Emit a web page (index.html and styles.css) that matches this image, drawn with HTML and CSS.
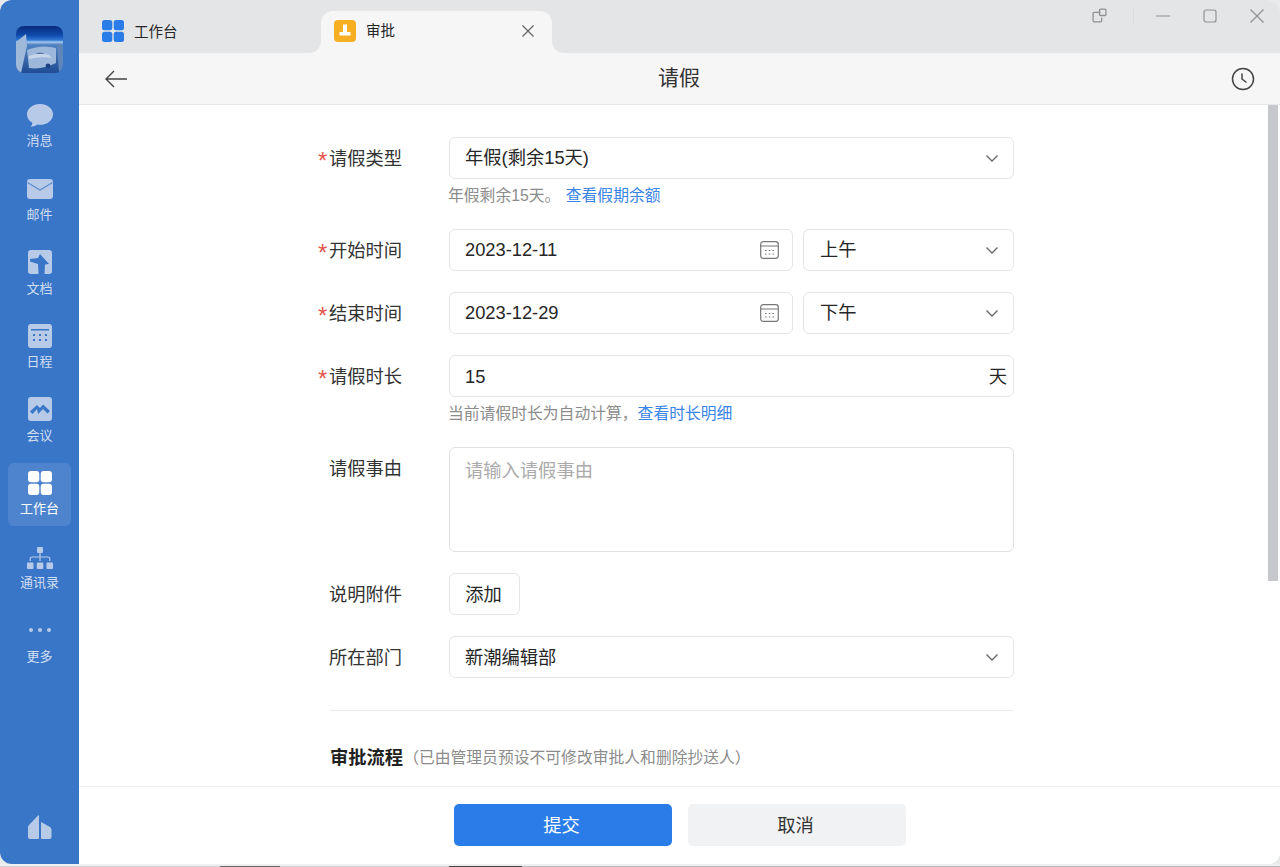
FILE: index.html
```html
<!DOCTYPE html>
<html lang="zh-CN">
<head>
<meta charset="utf-8">
<title>请假</title>
<link rel="stylesheet" href="styles.css">
</head>
<body>
<div class="window">
  <aside class="sidebar">
    <svg class="avatar" viewBox="0 0 47 47">
      <defs>
        <linearGradient id="sky" x1="0" y1="0" x2="0" y2="1">
          <stop offset="0" stop-color="#082a7c"/>
          <stop offset="0.2" stop-color="#0f4cae"/>
          <stop offset="0.3" stop-color="#2f78d4"/>
          <stop offset="0.34" stop-color="#a8c8ee"/>
          <stop offset="0.4" stop-color="#4f82c2"/>
          <stop offset="1" stop-color="#1f4c94"/>
        </linearGradient>
      </defs>
      <rect width="47" height="47" fill="url(#sky)"/>
      <path d="M0 47V16L10 8L11 20L5 47Z" fill="#9fb9da"/>
      <path d="M11 24Q26 18 40 22L40 37Q26 44 13 42Z" fill="#9db8da"/>
      <path d="M13 30Q24 25 33 29L36 32Q24 30 13 33Z" fill="#c6d6ea"/>
      <path d="M19 28Q24 25 29 28Z" fill="#54779f"/>
      <circle cx="32" cy="40" r="2.400" fill="#1d4186"/>
      <path d="M41 18L47 19V47H43Z" fill="#5f86bb"/>
    </svg>
    <nav class="nav">
      <div class="nav-item">
        <svg class="nav-icon" viewBox="0 0 26 26"><path d="M13 2C5.800 2 0 6.500 0 12.400C0 16 2.100 19 5.400 20.800C5.300 22.300 4.500 23.700 3.600 24.800C6.500 24.500 8.900 23.500 10.600 22.500C11.400 22.700 12.200 22.800 13 22.800C20.200 22.800 26 18.200 26 12.400C26 6.500 20.200 2 13 2Z"/></svg>
        <span>消息</span>
      </div>
      <div class="nav-item">
        <svg class="nav-icon" viewBox="0 0 26 26"><rect x="0" y="3" width="26" height="20" rx="3"/><path class="mail-line" d="M0.500 6.500L13 14L25.500 6.500"/></svg>
        <span>邮件</span>
      </div>
      <div class="nav-item">
        <svg class="nav-icon" viewBox="0 0 26 26"><path fill-rule="evenodd" d="M4 1H22A3 3 0 0 1 25 4V22A3 3 0 0 1 22 25H4A3 3 0 0 1 1 22V4A3 3 0 0 1 4 1ZM13 5L22 15L18 15.500L17.500 25H11.500L11 15L3 12.500V10L11 9Z"/></svg>
        <span>文档</span>
      </div>
      <div class="nav-item">
        <svg class="nav-icon" viewBox="0 0 26 26"><path fill-rule="evenodd" d="M4 1H22A3 3 0 0 1 25 4V22A3 3 0 0 1 22 25H4A3 3 0 0 1 1 22V4A3 3 0 0 1 4 1ZM4 6V7.500H22V6ZM6 11V13H8V11ZM12 11V13H14V11ZM18 11V13H20V11ZM6 16V18H8V16ZM12 16V18H14V16ZM18 16V18H20V16Z"/></svg>
        <span>日程</span>
      </div>
      <div class="nav-item">
        <svg class="nav-icon" viewBox="0 0 26 26"><path fill-rule="evenodd" d="M4 1H22A3 3 0 0 1 25 4V22A3 3 0 0 1 22 25H4A3 3 0 0 1 1 22V4A3 3 0 0 1 4 1ZM3 15.500L10 9L13 12L16 8.500L23 15L20.500 17.500L16 13L11 18L10 13L5.500 18Z"/></svg>
        <span>会议</span>
      </div>
      <div class="nav-item nav-active">
        <svg class="nav-icon" viewBox="0 0 26 26"><rect x="1" y="1" width="11.300" height="11.300" rx="3"/><rect x="13.700" y="1" width="11.300" height="11.300" rx="3"/><rect x="1" y="13.700" width="11.300" height="11.300" rx="3"/><rect x="13.700" y="13.700" width="11.300" height="11.300" rx="3"/></svg>
        <span>工作台</span>
      </div>
      <div class="nav-item">
        <svg class="nav-icon" viewBox="0 0 26 26"><rect x="10" y="3" width="6" height="6" rx="1"/><rect x="0" y="18.500" width="6.500" height="6.500" rx="1"/><rect x="9.800" y="18.500" width="6.500" height="6.500" rx="1"/><rect x="19.500" y="18.500" width="6.500" height="6.500" rx="1"/><path class="org-line" d="M3.200 17V14.500Q3.200 13 5 13H21Q22.800 13 22.800 14.500V17M13 9V17"/></svg>
        <span>通讯录</span>
      </div>
      <div class="nav-item">
        <svg class="nav-icon" viewBox="0 0 26 26"><circle cx="4" cy="13" r="2"/><circle cx="13" cy="13" r="2"/><circle cx="22" cy="13" r="2"/></svg>
        <span>更多</span>
      </div>
    </nav>
    <svg class="brand" viewBox="0 0 24 26"><path d="M1 11L10 1.500Q11 0.500 11 2.500V24A1 1 0 0 1 10 25H2A2 2 0 0 1 0 23V13Q0 12 1 11Z"/><path d="M13 8L22 13Q23.500 14 23.500 16V23A2 2 0 0 1 21.500 25H14A1 1 0 0 1 13 24Z"/></svg>
  </aside>

  <main class="main">
    <div class="tabbar">
      <div class="tab">
        <svg class="tab-icon" viewBox="0 0 22 22"><rect x="0" y="0" width="10.300" height="10.300" rx="2.500" fill="#2a7de8"/><rect x="11.700" y="0" width="10.300" height="10.300" rx="2.500" fill="#2a7de8"/><rect x="0" y="11.700" width="10.300" height="10.300" rx="2.500" fill="#2a7de8"/><rect x="11.700" y="11.700" width="10.300" height="10.300" rx="2.500" fill="#2a7de8"/></svg>
        <span class="tab-label">工作台</span>
      </div>
      <div class="tab-active-wrap">
        <div class="tab-active">
          <svg class="tab-icon" viewBox="0 0 22 22"><rect width="22" height="22" rx="4" fill="#f6ae22"/><path d="M9 4.500H13V12H16.500V15.500H5.500V12H9Z" fill="#fff"/></svg>
          <span class="tab-title">审批</span>
          <svg class="tab-close" viewBox="0 0 12 12"><path d="M0.500 0.500L11.500 11.500M11.500 0.500L0.500 11.500"/></svg>
        </div>
      </div>
      <div class="tab-rest">
        <svg class="win-restore" viewBox="0 0 14 14"><path d="M8 4H2A1 1 0 0 0 1 5V12A1 1 0 0 0 2 13H8A1 1 0 0 0 9 12V9"/><rect x="7" y="1" width="6" height="6" rx="1"/></svg>
        <i class="win-sep"></i>
        <svg class="win-min" viewBox="0 0 14 2"><path d="M0 1H14"/></svg>
        <svg class="win-max" viewBox="0 0 14 14"><rect x="1" y="1" width="12" height="12" rx="2"/></svg>
        <svg class="win-close" viewBox="0 0 14 14"><path d="M0.500 0.500L13.500 13.500M13.500 0.500L0.500 13.500"/></svg>
      </div>
    </div>

    <header class="header">
      <svg class="back" viewBox="0 0 22 18"><path d="M22 9H1M9 1L1 9L9 17"/></svg>
      <h1 class="page-title">请假</h1>
      <svg class="clock" viewBox="0 0 24 24"><circle cx="12" cy="12" r="10.500"/><path d="M11 6.500V12L15.500 15.500"/></svg>
    </header>

    <div class="content">
      <div class="form">
        <div class="row">
          <label class="label"><b class="star">*</b>请假类型</label>
          <div class="control">
            <div class="field"><span>年假(剩余15天)</span><svg class="chev" viewBox="0 0 12 7"><path d="M0.500 0.500L6 6L11.500 0.500"/></svg></div>
            <p class="hint">年假剩余15天。 <a class="link link-wide">查看假期余额</a></p>
          </div>
        </div>
        <div class="row">
          <label class="label"><b class="star">*</b>开始时间</label>
          <div class="control pair">
            <div class="field date"><span>2023-12-11</span>
              <svg class="cal" viewBox="0 0 19 18"><rect x="0.700" y="0.700" width="17.600" height="16.600" rx="2.500"/><path d="M0.700 5H18.300M5 9.500H6.500M8.800 9.500H10.300M12.500 9.500H14M5 13H6.500M8.800 13H10.300M12.500 13H14"/></svg>
            </div>
            <div class="field half"><span>上午</span><svg class="chev" viewBox="0 0 12 7"><path d="M0.500 0.500L6 6L11.500 0.500"/></svg></div>
          </div>
        </div>
        <div class="row">
          <label class="label"><b class="star">*</b>结束时间</label>
          <div class="control pair">
            <div class="field date"><span>2023-12-29</span>
              <svg class="cal" viewBox="0 0 19 18"><rect x="0.700" y="0.700" width="17.600" height="16.600" rx="2.500"/><path d="M0.700 5H18.300M5 9.500H6.500M8.800 9.500H10.300M12.500 9.500H14M5 13H6.500M8.800 13H10.300M12.500 13H14"/></svg>
            </div>
            <div class="field half"><span>下午</span><svg class="chev" viewBox="0 0 12 7"><path d="M0.500 0.500L6 6L11.500 0.500"/></svg></div>
          </div>
        </div>
        <div class="row">
          <label class="label"><b class="star">*</b>请假时长</label>
          <div class="control">
            <div class="field unit-field"><span>15</span><span>天</span></div>
            <p class="hint">当前请假时长为自动计算，<a class="link">查看时长明细</a></p>
          </div>
        </div>
        <div class="row">
          <label class="label"><b class="star"></b>请假事由</label>
          <div class="control"><div class="textarea">请输入请假事由</div></div>
        </div>
        <div class="row">
          <label class="label"><b class="star"></b>说明附件</label>
          <div class="control"><div class="add-btn">添加</div></div>
        </div>
        <div class="row">
          <label class="label"><b class="star"></b>所在部门</label>
          <div class="control">
            <div class="field field-low"><span>新潮编辑部</span><svg class="chev" viewBox="0 0 12 7"><path d="M0.500 0.500L6 6L11.500 0.500"/></svg></div>
          </div>
        </div>
        <hr class="divider">
        <div class="flow"><strong>审批流程</strong><span>（已由管理员预设不可修改审批人和删除抄送人）</span></div>
      </div>
      <div class="scrollbar"></div>
    </div>

    <footer class="footer">
      <div class="btn btn-primary">提交</div>
      <div class="btn btn-plain">取消</div>
    </footer>
  </main>
</div>
<div class="strip"></div>
</body>
</html>
```
FILE: styles.css
```css
* { box-sizing: border-box; }
html, body { margin: 0; height: 100%; }
body {
  height: 867px;
  overflow: hidden;
  background: #e9eaec;
  font-family: "Liberation Sans", "Noto Sans CJK SC", sans-serif;
  line-height: 24px;
  color: #262626;
  display: flex;
  flex-direction: column;
}
.window {
  height: 864px;
  flex: none;
  display: flex;
  border-radius: 12px;
  overflow: hidden;
  background: #fff;
}
.strip {
  flex: 1;
  background-color: #eeeff0;
  background-image: linear-gradient(90deg, #cfd0d2 0 220px, #666 220px 280px, #cfd0d2 280px 449px, #444 449px 522px, #b9babc 522px 100%);
  background-size: 100% 1px;
  background-position: bottom;
  background-repeat: no-repeat;
}

/* sidebar */
.sidebar {
  width: 79px;
  flex: none;
  background: #3a76c8;
  display: flex;
  flex-direction: column;
  align-items: center;
  padding-top: 26px;
  padding-bottom: 24px;
}
.avatar { width: 47px; height: 47px; border-radius: 8px; flex: none; }
.nav {
  margin-top: 22px;
  display: flex;
  flex-direction: column;
  gap: 10.6px;
  width: 63px;
}
.nav-item {
  height: 63px;
  padding-top: 7px;
  display: flex;
  flex-direction: column;
  align-items: center;
  border-radius: 6px;
  font-size: 13px;
  line-height: 18px;
  color: #d2dff3;
}
.nav-item span { margin-top: 4.4px; white-space: nowrap; }
.nav-icon { width: 26px; height: 26px; fill: #b7cbe8; }
.mail-line { fill: none; stroke: #5f8ccf; stroke-width: 1.200; }
.org-line { fill: none; stroke: #b7cbe8; stroke-width: 1.200; }
.nav-active { background: rgba(255, 255, 255, 0.1); color: #fff; }
.nav-active .nav-icon { fill: #fff; }
.brand { width: 24px; height: 26px; margin-top: auto; fill: #b7cbe8; }

/* tabs */
.main { flex: 1; min-width: 0; display: flex; flex-direction: column; }
.tabbar { height: 53px; flex: none; display: flex; background: #f6f6f7; }
.tab {
  width: 242px;
  background: #e4e5e7;
  border-bottom-right-radius: 12px;
  display: flex;
  align-items: center;
  gap: 10px;
  padding-left: 23px;
  padding-top: 9px;
  font-size: 14.5px;
}
.tab-label { padding-top: 1px; }
.tab-icon { width: 22px; height: 22px; flex: none; }
.tab-active-wrap { width: 231px; background: #e4e5e7; padding-top: 11px; }
.tab-active {
  height: 42px;
  background: #f6f6f7;
  border-radius: 12px 12px 0 0;
  display: flex;
  align-items: center;
  padding: 0 18px 2px 13px;
  gap: 10px;
  font-size: 14.5px;
}
.tab-title { flex: 1; }
.tab-close { width: 12px; height: 12px; fill: none; stroke: #666; stroke-width: 1.300; }
.tab-rest {
  flex: 1;
  background: #e4e5e7;
  border-bottom-left-radius: 12px;
  display: flex;
  align-items: flex-start;
  padding: 8px 0 0 540px;
}
.tab-rest svg { fill: none; stroke: #8f9093; stroke-width: 1.200; flex: none; }
.win-restore { width: 15px; height: 15px; }
.win-sep { width: 1px; height: 14px; background: #dadbdd; margin: 1px 0 0 26px; }
.win-min { width: 14px; height: 2px; margin: 7px 0 0 22px; }
.win-max { width: 14px; height: 14px; margin: 1px 0 0 33px; }
.win-close { width: 14px; height: 14px; margin: 1px 0 0 33px; }

/* header */
.header {
  height: 52px;
  flex: none;
  background: #f6f6f7;
  border-bottom: 1px solid #e6e6e8;
  display: flex;
  align-items: center;
  justify-content: space-between;
  padding: 0 25px 0 26px;
}
.back { width: 22px; height: 18px; fill: none; stroke: #444; stroke-width: 1.400; }
.page-title { margin: 0 0 2px; font-size: 21px; font-weight: 400; color: #333; }
.clock { width: 24px; height: 24px; fill: none; stroke: #444; stroke-width: 1.500; }

/* form */
.content { flex: 1; min-height: 0; position: relative; overflow: hidden; background: #fff; }
.form {
  width: 695px;
  margin-left: 239px;
  padding-top: 32px;
  display: flex;
  flex-direction: column;
  gap: 21px;
}
.row { display: flex; align-items: flex-start; }
.label {
  width: 131px;
  flex: none;
  height: 42px;
  padding-top: 2px;
  display: flex;
  align-items: center;
  font-size: 18.3px;
  color: #333;
}
.star {
  width: 11px;
  margin-right: 1px;
  margin-left: 0;
  margin-top: 4px;
  flex: none;
  color: #e5564e;
  font-weight: 400;
  font-size: 24px;
}
.label .star { width: 11px; margin-right: 0; }
.control { width: 565px; flex: none; }
.pair { display: flex; gap: 10px; }
.field {
  height: 42px;
  border: 1px solid #e4e5e7;
  border-radius: 6px;
  background: #fff;
  display: flex;
  align-items: center;
  justify-content: space-between;
  padding: 0 15px;
  font-size: 18.3px;
  color: #262626;
}
.field-low span { padding-top: 2px; }
.date { width: 344px; flex: none; padding-right: 13px; }
.half { flex: 1; padding-left: 16px; }
.unit-field { padding-right: 6px; }
.unit-field span { padding-top: 1px; }
.chev { width: 12px; height: 7px; fill: none; stroke: #666; stroke-width: 1.300; }
.cal { width: 19px; height: 18px; fill: none; stroke: #777; stroke-width: 1.200; }
.hint {
  margin: 4px 0 0 -1px;
  height: 25px;
  line-height: 25px;
  font-size: 15.8px;
  color: #8c8c8c;
  white-space: nowrap;
}
.link { color: #3a84e6; }
.link-wide { margin-left: 1px; }
.textarea {
  height: 105px;
  border: 1px solid #e0e1e3;
  border-radius: 6px;
  padding: 10px 15px;
  font-size: 18.3px;
  line-height: 26px;
  color: #ababab;
}
.add-btn {
  width: 71px;
  height: 42px;
  padding-top: 2px;
  padding-right: 2px;
  border: 1px solid #e4e5e7;
  border-radius: 6px;
  display: flex;
  align-items: center;
  justify-content: center;
  font-size: 18.3px;
}
.divider {
  width: 683px;
  margin: 11px 0 0 12px;
  border: 0;
  border-top: 1px solid #e8e8e8;
}
.flow { margin: 12px 0 0 12px; display: flex; align-items: center; line-height: 28px; white-space: nowrap; }
.flow strong { font-size: 18.3px; color: #1f1f1f; }
.flow span { font-size: 15.8px; color: #8c8c8c; }
.scrollbar {
  position: absolute;
  top: 0;
  right: 2px;
  width: 10px;
  height: 476px;
  background: #c6c8cb;
}

/* footer */
.footer {
  height: 78px;
  flex: none;
  border-top: 1px solid #efefef;
  background: #fff;
  display: flex;
  justify-content: center;
  gap: 16px;
  padding-top: 17px;
}
.btn {
  width: 218px;
  height: 42px;
  padding: 2px 2px 0 0;
  border-radius: 5px;
  display: flex;
  align-items: center;
  justify-content: center;
  font-size: 18.3px;
}
.btn-primary { background: #2a7de8; color: #fff; }
.btn-plain { background: #f1f2f3; color: #333; }
```
